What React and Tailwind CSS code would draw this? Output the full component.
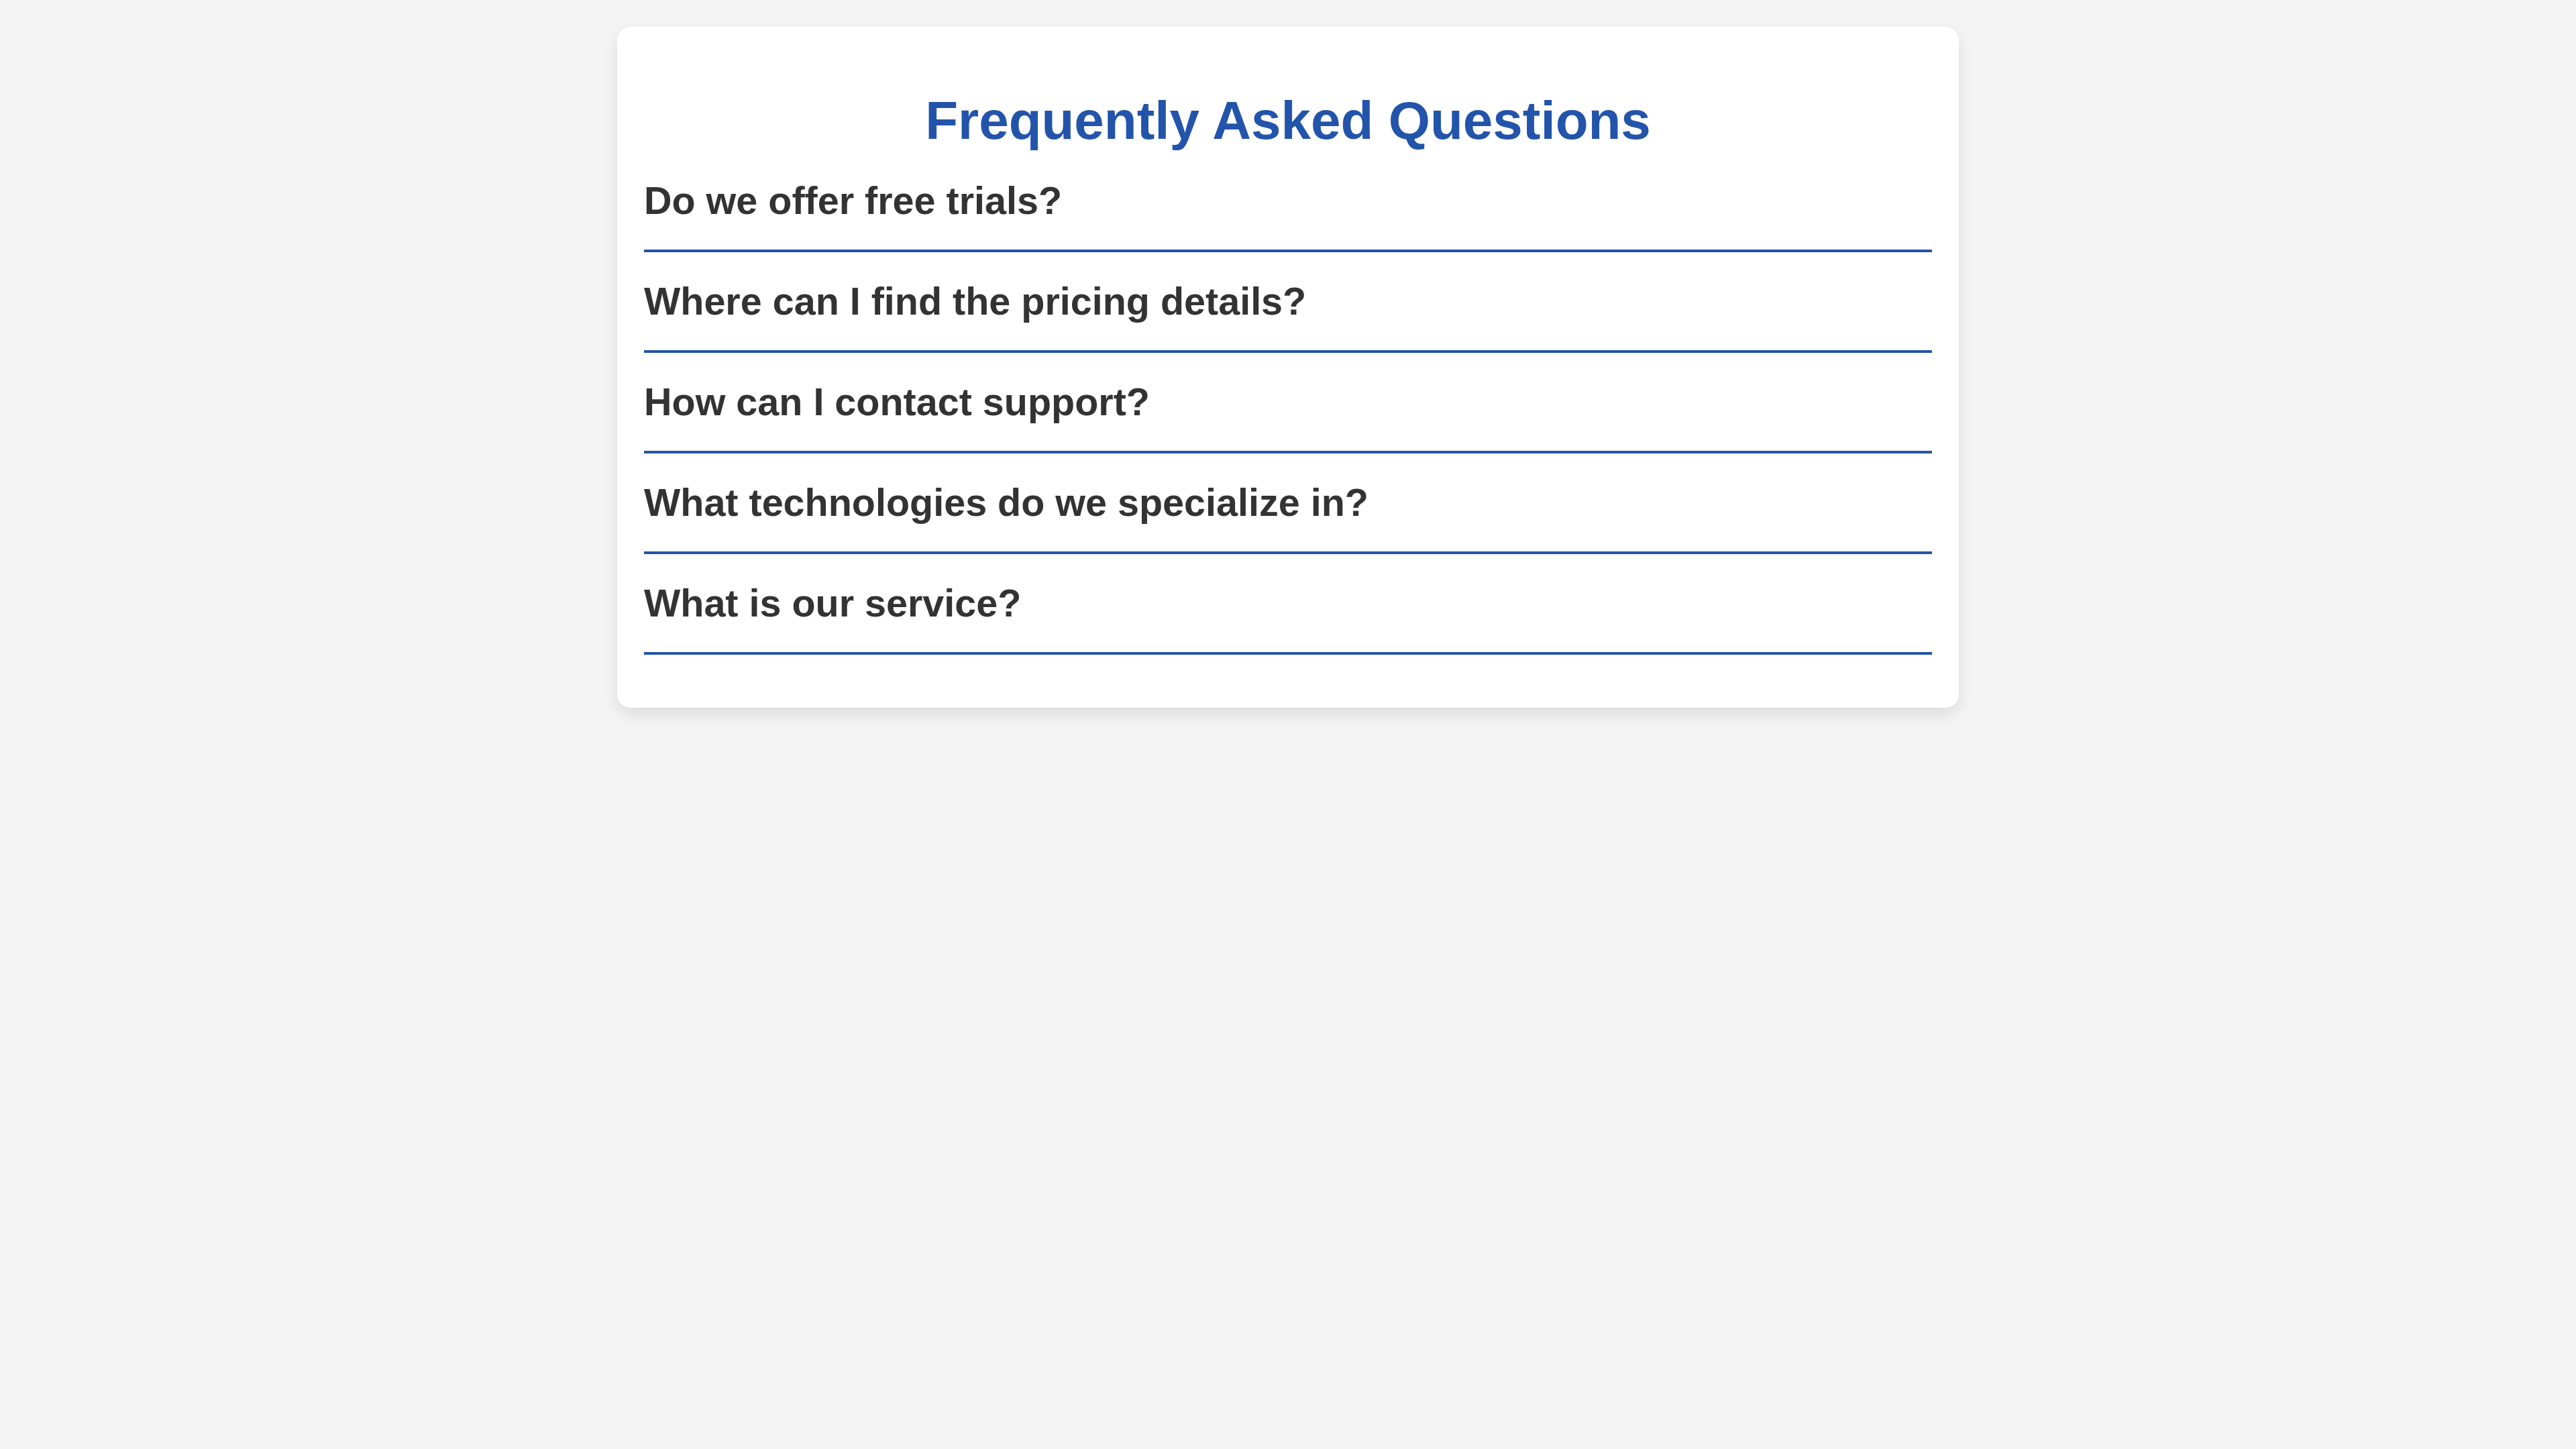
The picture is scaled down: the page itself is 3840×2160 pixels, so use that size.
import React, { useState } from 'react';

const faqs = [
    { q: 'Do we offer free trials?', a: 'Yes, every plan starts with a free trial period.' },
    { q: 'Where can I find the pricing details?', a: 'Pricing details are listed on our pricing page.' },
    { q: 'How can I contact support?', a: 'You can reach support through the contact form or by email.' },
    { q: 'What technologies do we specialize in?', a: 'We specialize in modern web and cloud technologies.' },
    { q: 'What is our service?', a: 'We build and maintain software for our clients.' },
];

const FaqItem = ({ item, open, onToggle }) => (
    <div className="border-b-4 border-[#2354ab]">
        <button
            type="button"
            onClick={onToggle}
            className="w-full text-left py-[40px] text-[57.5px] leading-[66px] font-bold text-[#333333] cursor-pointer"
        >
            {item.q}
        </button>
        {open && <p className="pb-[40px] text-[40px] text-[#555555]">{item.a}</p>}
    </div>
);

export default function App() {
    const [openIndex, setOpenIndex] = useState(null);

    return (
        <div className="min-h-screen bg-[#f4f4f4] pt-[40px] font-['Liberation_Sans',Arial,sans-serif]">
            <div className="w-[2000px] mx-auto bg-white rounded-[20px] shadow-[0_10px_25px_rgba(0,0,0,0.1)] px-[40px] pt-[40px] pb-[79px]">
                <h1 className="mt-[54px] text-center text-[80px] leading-[92px] font-bold text-[#2354ab]">
                    Frequently Asked Questions
                </h1>
                <div className="flex flex-col">
                    {faqs.map((item, i) => (
                        <FaqItem
                            key={item.q}
                            item={item}
                            open={openIndex === i}
                            onToggle={() => setOpenIndex(openIndex === i ? null : i)}
                        />
                    ))}
                </div>
            </div>
        </div>
    );
}
